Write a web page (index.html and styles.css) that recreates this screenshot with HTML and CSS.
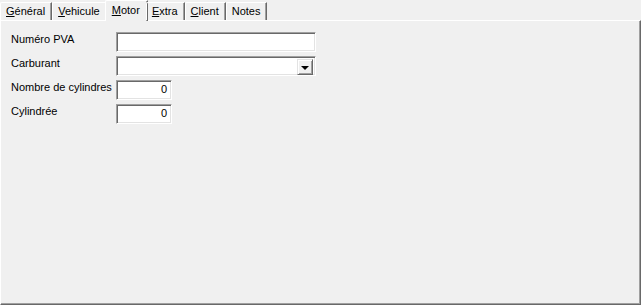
FILE: index.html
```html
<!DOCTYPE html>
<html lang="fr">
<head>
    <meta charset="UTF-8">
    <title>Véhicule - Motor</title>
    <link rel="stylesheet" href="styles.css">
</head>
<body>
    <div class="tab-control">
        <div class="tabs">
            <div class="tab"><u>G</u>énéral</div>
            <div class="tab"><u>V</u>ehicule</div>
            <div class="tab active"><u>M</u>otor</div>
            <div class="tab"><u>E</u>xtra</div>
            <div class="tab"><u>C</u>lient</div>
            <div class="tab">Notes</div>
        </div>
        <div class="panel">
            <div class="form">
                <label class="field-label">Numéro PVA</label>
                <div class="edit wide"></div>

                <label class="field-label">Carburant</label>
                <div class="edit wide combo">
                    <span class="combo-btn"><span class="arrow"></span></span>
                </div>

                <label class="field-label">Nombre de cylindres</label>
                <div class="edit short">0</div>

                <label class="field-label">Cylindrée</label>
                <div class="edit short">0</div>
            </div>
        </div>
    </div>
</body>
</html>
```

FILE: styles.css
```css
html, body {
    margin: 0;
    padding: 0;
    width: 641px;
    height: 305px;
    overflow: hidden;
    background-color: #f0f0f0;
    font-family: "Liberation Sans", Arial, sans-serif;
    font-size: 11px;
    color: #000;
}
.tab-control {
    display: flex;
    flex-direction: column;
    height: 305px;
}
.tabs {
    display: flex;
    align-items: flex-end;
    height: 20px;
    padding-left: 0;
    position: relative;
    z-index: 1;
}
.tab {
    height: 17px;
    line-height: 17px;
    padding: 0 6px 0 5px;
    border-top: 1px solid #fff;
    border-left: 1px solid #fff;
    border-right: 1px solid #696969;
    box-shadow: inset -1px 0 #a0a0a0;
    border-top-left-radius: 2px;
}
.tab.active {
    height: 20px;
    line-height: 18px;
    margin: 0 -2px -1px -2px;
    padding: 0 7px 0 6px;
    background-color: #f0f0f0;
}
.panel {
    flex: 1;
    border-top: 1px solid #fff;
    border-left: 1px solid #fff;
    border-right: 1px solid #696969;
    border-bottom: 1px solid #696969;
    box-shadow: inset -1px -1px #a0a0a0;
}
.form {
    display: grid;
    grid-template-columns: 105px auto;
    grid-auto-rows: 20px;
    row-gap: 4px;
    padding: 11px 0 0 10px;
    justify-items: start;
}
.field-label {
    padding-top: 1px;
    line-height: 13px;
    white-space: nowrap;
}
/* classic sunken edit box */
.edit {
    box-sizing: border-box;
    height: 20px;
    background-color: #fff;
    border-top: 1px solid #a0a0a0;
    border-left: 1px solid #a0a0a0;
    border-right: 1px solid #fff;
    border-bottom: 1px solid #fff;
    box-shadow: inset 1px 1px #696969, inset -1px -1px #e3e3e3;
    line-height: 17px;
    text-align: right;
}
.edit.wide {
    width: 200px;
}
.edit.short {
    width: 56px;
    padding-right: 4px;
}
.combo {
    display: flex;
    justify-content: flex-end;
    padding: 2px;
}
.combo-btn {
    box-sizing: border-box;
    width: 16px;
    height: 16px;
    background-color: #f0f0f0;
    border-top: 1px solid #e3e3e3;
    border-left: 1px solid #e3e3e3;
    border-right: 1px solid #696969;
    border-bottom: 1px solid #696969;
    box-shadow: inset 1px 1px #fff, inset -1px -1px #a0a0a0;
    display: flex;
    align-items: center;
    justify-content: center;
}
.arrow {
    width: 0;
    height: 0;
    border-left: 4px solid transparent;
    border-right: 4px solid transparent;
    border-top: 4px solid #000;
    margin-top: 1px;
}
```
